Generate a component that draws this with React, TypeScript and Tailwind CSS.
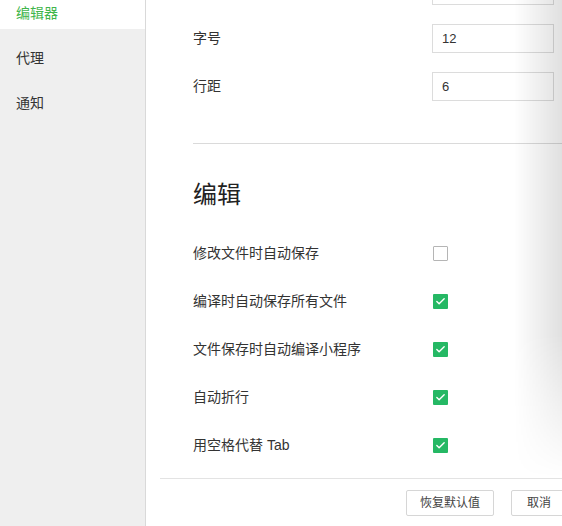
import { Check } from 'lucide-react';

const font = { fontFamily: '"Liberation Sans", "Noto Sans CJK SC", sans-serif' };

const NumberRow = ({ label, value }: { label: string, value: string }) => (
    <div className='flex h-12 items-center'>
        <div className='w-[239px] text-[14px] text-[#333]'>{label}</div>
        <input
            type='text'
            readOnly
            value={value}
            className='h-[29px] w-[122px] border border-[#dcdcdc] bg-white px-[9px] text-[13px] text-[#333] outline-none'
        />
    </div>
)

const CheckRow = ({ label, checked }: { label: string, checked: boolean }) => (
    <div className='flex h-12 items-center'>
        <div className='w-[240px] text-[14px] text-[#333]'>{label}</div>
        {checked ? (
            <span className='flex h-[15px] w-[15px] items-center justify-center rounded-[1px] bg-[#25b864]'>
                <Check size={11} strokeWidth={3} color='#fff' />
            </span>
        ) : (
            <span className='h-[15px] w-[15px] rounded-[1px] border border-[#b5b5b5] bg-white' />
        )}
    </div>
)

export default function App() {
    return (
        <div className='flex h-[526px] w-[562px] overflow-hidden bg-white' style={font}>
            {/* sidebar */}
            <div className='w-[146px] shrink-0 border-r border-[#d9d9d9] bg-[#efefef]'>
                <div className='flex h-[29px] items-center bg-white pb-[3px] pl-4 text-[14px] text-[#3fb54b]'>编辑器</div>
                <div className='mt-[7px]'>
                    <div className='flex h-[45px] items-center pl-4 text-[14px] text-[#333]'>代理</div>
                    <div className='flex h-[45px] items-center pl-4 text-[14px] text-[#333]'>通知</div>
                </div>
            </div>

            {/* main */}
            <div className='relative flex min-w-0 flex-1 flex-col'>
                <div className='flex-1 overflow-hidden pl-[47px]'>
                    <div className='mt-[-34px]'>
                        <NumberRow label='' value='' />
                        <NumberRow label='字号' value='12' />
                        <NumberRow label='行距' value='6' />
                    </div>
                    <div className='mt-[33px] border-t border-[#dadada]' />
                    <div className='mt-[31px] h-10 text-[24px] leading-10 text-[#222]'>编辑</div>
                    <div className='mt-[14px]'>
                        <CheckRow label='修改文件时自动保存' checked={false} />
                        <CheckRow label='编译时自动保存所有文件' checked />
                        <CheckRow label='文件保存时自动编译小程序' checked />
                        <CheckRow label='自动折行' checked />
                        <CheckRow label='用空格代替 Tab' checked />
                    </div>
                </div>

                <div className='ml-[14px] flex h-12 shrink-0 items-center gap-[17px] border-t border-[#e3e3e3] bg-white pl-[246px]'>
                    <button className='h-[26px] w-[88px] shrink-0 rounded-[2px] border border-[#d6d6d6] bg-white text-[12px] text-[#444]'>恢复默认值</button>
                    <button className='h-[26px] w-[56px] shrink-0 rounded-[2px] border border-[#d6d6d6] bg-white text-[12px] text-[#444]'>取消</button>
                </div>

                {/* shadow of the panel on the right */}
                <div className='pointer-events-none absolute top-0 right-0 h-[478px] w-[48px] bg-[linear-gradient(to_right,rgba(0,0,0,0),rgba(0,0,0,0.12))] [mask-image:linear-gradient(to_bottom,black_70%,transparent)]' />
            </div>
        </div>
    )
}
